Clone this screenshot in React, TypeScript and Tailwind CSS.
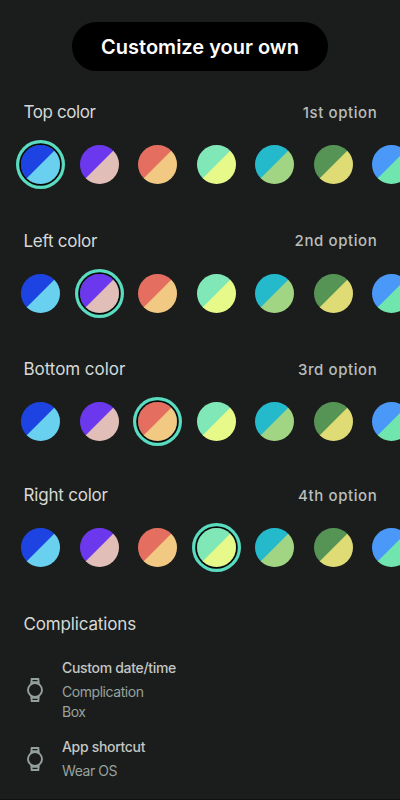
import { clsx } from "clsx";

const swatches = [
  "bg-[linear-gradient(135deg,#1d44e3_49.3%,#69d0ef_50.7%)]",
  "bg-[linear-gradient(135deg,#6c38ed_49.3%,#e2beb8_50.7%)]",
  "bg-[linear-gradient(135deg,#e46f60_49.3%,#f2c983_50.7%)]",
  "bg-[linear-gradient(135deg,#80e7b7_49.3%,#e7fa89_50.7%)]",
  "bg-[linear-gradient(135deg,#24bacc_49.3%,#a1d483_50.7%)]",
  "bg-[linear-gradient(135deg,#559455_49.3%,#dfdb75_50.7%)]",
  "bg-[linear-gradient(135deg,#4a98f8_49.3%,#70e5ad_50.7%)]",
];

const sections = [
  { title: "Top color", option: "1st option", selected: 0, height: "h-[128.5px]", tracking: "tracking-[-0.4px]" },
  { title: "Left color", option: "2nd option", selected: 1, height: "h-[128.5px]", tracking: "tracking-[-0.25px]" },
  { title: "Bottom color", option: "3rd option", selected: 2, height: "h-[126px]", tracking: "tracking-[-0.05px]" },
  { title: "Right color", option: "4th option", selected: 3, height: "h-[128px]", tracking: "tracking-[-0.2px]" },
];

const complications = [
  { title: "Custom date/time", lines: ["Complication", "Box"] },
  { title: "App shortcut", lines: ["Wear OS"] },
];

function WatchIcon() {
  return (
    <svg width="18" height="26" viewBox="0 0 18 26" fill="none" stroke="#94a09b" strokeWidth="1.9">
      <circle cx="9" cy="13" r="7" />
      <path d="M5.2 7.2 5.7 2h6.6l.5 5.2M5.2 5.2h7.6M5.2 18.8l.5 5.2h6.6l.5-5.2M5.2 20.8h7.6" />
    </svg>
  );
}

function Swatch({ color, selected }: { color: string; selected: boolean }) {
  return (
    <div
      className={clsx(
        "size-[39px] shrink-0 rounded-full",
        color,
        selected && "shadow-[0_0_0_1.8px_#080a09,0_0_0_5px_#59dcc0]"
      )}
    />
  );
}

export default function App() {
  return (
    <main className="h-[800px] w-[400px] overflow-hidden border-b border-[#120f13] bg-[#1b1d1c] font-['Inter',sans-serif]">
      <div className="pt-[22px]">
        <h1 className="mx-auto flex h-[49px] w-64 items-center justify-center rounded-full bg-black text-xl font-semibold whitespace-nowrap text-white">
          Customize your own
        </h1>
      </div>

      <div className="pt-[30px]">
        {sections.map((section) => (
          <section key={section.title} className={section.height}>
            <div className="flex h-6 items-center justify-between pr-[22.6px] pl-[23.5px] whitespace-nowrap">
              <h2 className={clsx("text-[17px] text-[#d6d9d7]", section.tracking)}>{section.title}</h2>
              <span className="text-[15px] font-medium tracking-[0.6px] text-[#b9bdbb]">{section.option}</span>
            </div>
            <div className="mt-[20px] flex gap-[19.5px] pl-[21.4px]">
              {swatches.map((color, i) => (
                <Swatch key={color} color={color} selected={i === section.selected} />
              ))}
            </div>
          </section>
        ))}
      </div>

      <section>
        <h2 className="h-6 pl-[23.5px] text-[17px] leading-6 tracking-[-0.15px] text-[#d6d9d7]">Complications</h2>
        <ul className="mt-[22px]">
          {complications.map((item) => (
            <li key={item.title} className="mb-[15px] flex items-center pl-[26px]">
              <WatchIcon />
              <div className="pl-[18px] text-sm leading-5 whitespace-nowrap">
                <p className="mb-1 font-medium tracking-[-0.32px] text-[#c3c7c5]">{item.title}</p>
                {item.lines.map((line) => (
                  <p key={line} className="tracking-[-0.45px] text-[#98a29e]">{line}</p>
                ))}
              </div>
            </li>
          ))}
        </ul>
      </section>
    </main>
  );
}
